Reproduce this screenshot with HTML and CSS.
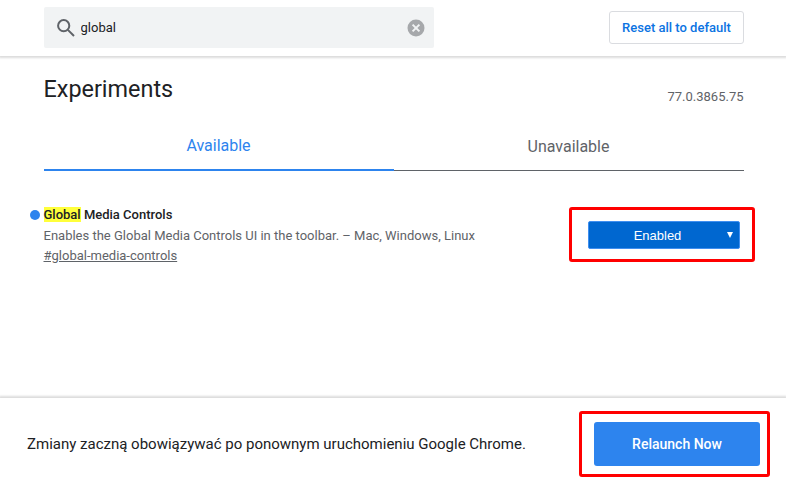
FILE: index.html
```html
<!DOCTYPE html>
<html lang="en">
<head>
    <meta charset="UTF-8">
    <meta name="viewport" content="width=device-width, initial-scale=1.0">
    <title>Experiments</title>
    <link rel="stylesheet" href="styles.css">
</head>
<body>
    <header>
        <div class="search">
            <svg class="search-icon" viewBox="0 0 18 18">
                <circle cx="6.7" cy="6.7" r="5.6"/>
                <path d="M10.9 10.9 L17 17"/>
            </svg>
            <input type="text" value="global" aria-label="Search flags">
            <svg class="clear-icon" viewBox="0 0 18 18">
                <circle cx="9" cy="9" r="8.5"/>
                <path d="M5.6 5.6 L12.4 12.4 M12.4 5.6 L5.6 12.4"/>
            </svg>
        </div>
        <button class="reset">Reset all to default</button>
    </header>
    <main>
        <div class="title-row">
            <h1>Experiments</h1>
            <span class="version">77.0.3865.75</span>
        </div>
        <nav>
            <a class="tab selected">Available</a>
            <a class="tab">Unavailable</a>
        </nav>
        <section class="experiment">
            <div class="info">
                <h2><mark>Global</mark> Media Controls</h2>
                <p>Enables the Global Media Controls UI in the toolbar. – Mac, Windows, Linux</p>
                <a class="permalink">#global-media-controls</a>
            </div>
            <div class="choice marked">
                <select aria-label="Global Media Controls">
                    <option>Default</option>
                    <option selected>Enabled</option>
                    <option>Disabled</option>
                </select>
                <svg class="arrow" viewBox="0 0 6 6"><path d="M0 0 H6 L3 6 Z"/></svg>
            </div>
        </section>
    </main>
    <footer>
        <p>Zmiany zaczną obowiązywać po ponownym uruchomieniu Google Chrome.</p>
        <div class="restart marked">
            <button class="relaunch">Relaunch Now</button>
        </div>
    </footer>
</body>
</html>
```

FILE: styles.css
```css
* {
    box-sizing: border-box;
}
body {
    display: flex;
    flex-direction: column;
    height: 486px;
    margin: 0;
    overflow: hidden;
    font-family: Roboto, sans-serif;
    font-size: 13px;
    color: #202124;
    background-color: white;
}
h1, h2, p {
    margin: 0;
    font-weight: normal;
}
header {
    display: flex;
    align-items: center;
    justify-content: space-between;
    height: 56px;
    padding: 0 42px 1px 44px;
    box-shadow: 0 1px 2px 1px rgba(0, 0, 0, 0.14);
}
.search {
    display: flex;
    align-items: center;
    width: 390px;
    height: 41px;
    padding: 0 9px 0 13px;
    border-radius: 2px;
    background-color: #f1f3f4;
}
.search-icon {
    width: 18px;
    height: 18px;
    fill: none;
    stroke: #5f6368;
    stroke-width: 2;
}
.search input {
    flex: 1;
    padding: 0 0 0 5.5px;
    border: none;
    background: none;
    font-family: Roboto, sans-serif;
    font-size: 13px;
    color: #202124;
}
.clear-icon {
    width: 18px;
    height: 18px;
    fill: #a6a8ab;
}
.clear-icon path {
    stroke: #f1f3f4;
    stroke-width: 2;
}
.reset {
    width: 135px;
    height: 33px;
    padding: 0;
    border: 1px solid #dadce0;
    border-radius: 3px;
    background-color: white;
    font-family: Roboto, sans-serif;
    font-size: 13px;
    font-weight: 500;
    color: #0b73e2;
}
main {
    flex: 1;
    width: 700px;
    margin-left: 43.5px;
}
.title-row {
    display: flex;
    justify-content: space-between;
    align-items: flex-end;
    height: 49px;
}
h1 {
    font-size: 23.4px;
    line-height: 32px;
}
.version {
    line-height: 16px;
    color: #5f6368;
}
nav {
    display: flex;
    height: 66px;
}
.tab {
    flex: 1;
    padding-top: 32px;
    border-bottom: 1px solid #5f6368;
    font-size: 16px;
    line-height: 20px;
    text-align: center;
    color: #5f6368;
}
.tab.selected {
    padding-top: 31px;
    border-bottom: 2px solid #2d84ee;
    color: #2d84ee;
}
.experiment {
    display: flex;
    justify-content: space-between;
    padding: 34px 3.5px 0 0;
    line-height: 20px;
    color: #5f6368;
}
h2 {
    position: relative;
    font-size: 13px;
    font-weight: 500;
    line-height: 20px;
    margin-bottom: 1px;
    color: #202124;
}
h2::before {
    content: "";
    position: absolute;
    left: -14px;
    top: 4.5px;
    width: 10px;
    height: 10px;
    border-radius: 50%;
    background-color: #2d84ee;
}
mark {
    background-color: #ffff3b;
    color: inherit;
}
.permalink {
    text-decoration: underline;
}
/* red frame around the control */
.marked {
    position: relative;
}
.marked::after {
    content: "";
    position: absolute;
    border: 3px solid #ff0000;
    border-radius: 3px;
    pointer-events: none;
}
.choice {
    width: 152px;
    height: 28px;
    margin-top: 16px;
}
.choice::after {
    inset: -14px -15px -13px -19px;
}
.choice select {
    display: block;
    width: 152px;
    height: 28px;
    padding: 0 13px 0 0;
    border: 1px solid #3f8ef0;
    border-radius: 2px;
    appearance: none;
    background-color: #0067d0;
    font-family: "Liberation Sans", sans-serif;
    font-size: 13px;
    text-align: center;
    text-align-last: center;
    color: white;
}
.arrow {
    position: absolute;
    right: 7px;
    top: 11px;
    width: 6px;
    height: 6px;
    fill: white;
}
footer {
    display: flex;
    align-items: center;
    justify-content: space-between;
    height: 88px;
    padding: 4px 26px 0 27px;
    background-color: white;
    box-shadow: 0 -1px 2px 1px rgba(0, 0, 0, 0.14);
}
footer p {
    font-size: 15px;
}
.restart::after {
    inset: -11px -10px -11px -15px;
}
.relaunch {
    display: block;
    width: 166px;
    height: 44px;
    border: none;
    border-radius: 3px;
    background-color: #2d84ee;
    font-family: Roboto, sans-serif;
    font-size: 14px;
    font-weight: 500;
    color: white;
}
```
